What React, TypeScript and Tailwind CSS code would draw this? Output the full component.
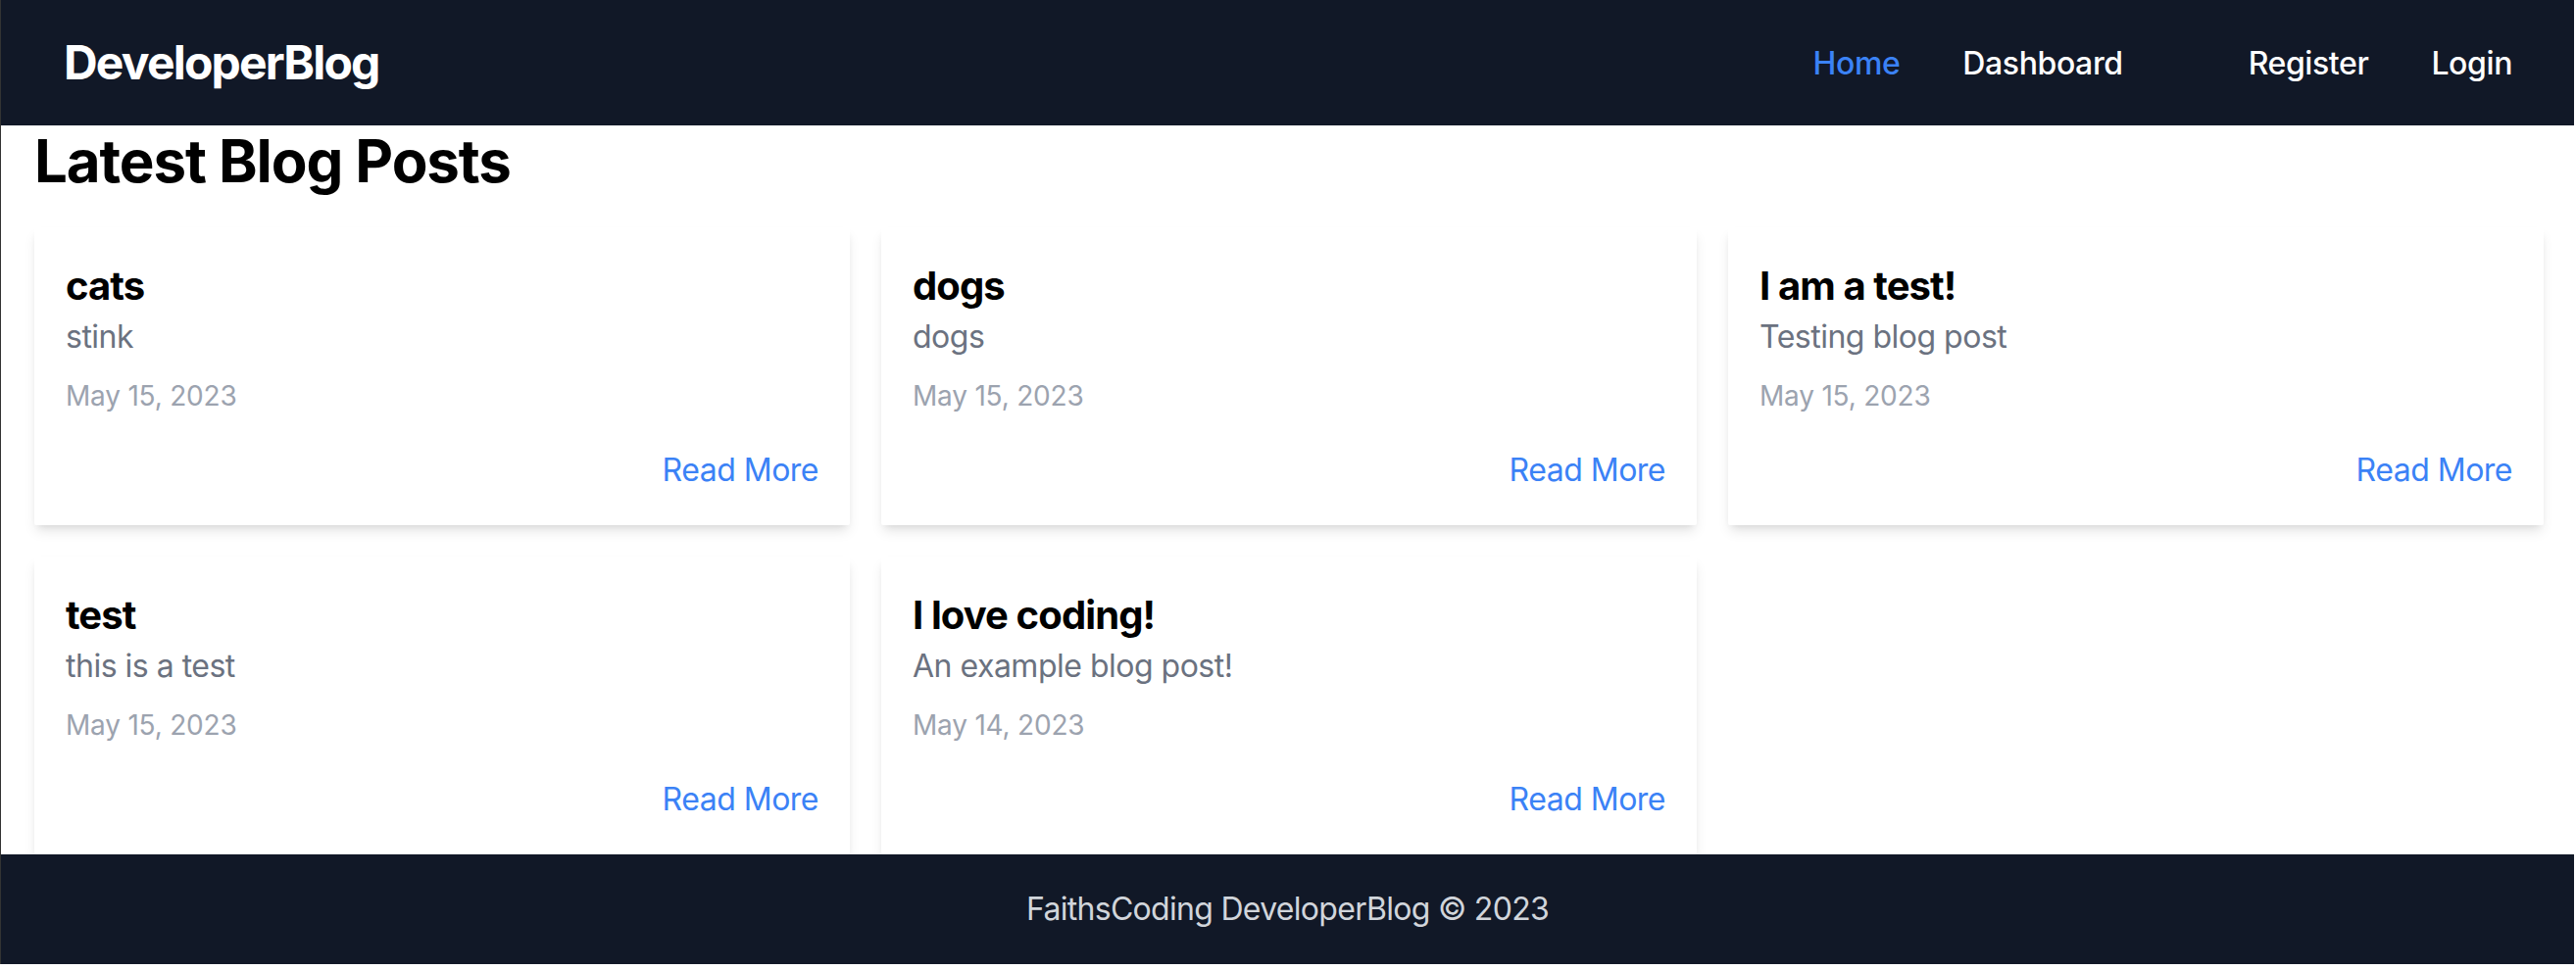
import React from "react";

type Post = { title: string; desc: string; date: string };

const posts: Post[] = [
  { title: "cats", desc: "stink", date: "May 15, 2023" },
  { title: "dogs", desc: "dogs", date: "May 15, 2023" },
  { title: "I am a test!", desc: "Testing blog post", date: "May 15, 2023" },
  { title: "test", desc: "this is a test", date: "May 15, 2023" },
  { title: "I love coding!", desc: "An example blog post!", date: "May 14, 2023" },
];

function Card({ post }: { post: Post }) {
  return (
    <div className="bg-white rounded-[2px] p-[32px] shadow-[0_8px_12px_-2px_rgba(0,0,0,0.1),0_4px_8px_-4px_rgba(0,0,0,0.1)]">
      <h2 className="text-[40px] leading-[56px] font-bold tracking-[-0.9px] text-black">{post.title}</h2>
      <p className="text-[32px] leading-[48px] tracking-[-0.5px] text-[#6b7280]">{post.desc}</p>
      <p className="mt-[16px] text-[28px] leading-[40px] tracking-[-0.2px] text-[#9ca3af]">{post.date}</p>
      <div className="mt-[32px] text-right">
        <a className="text-[32px] leading-[48px] tracking-[-0.5px] text-[#3b82f6]">Read More</a>
      </div>
    </div>
  );
}

export default function App() {
  return (
    <div className="font-['Inter','Liberation_Sans',sans-serif] bg-white border-l border-l-[#333333] border-r-2 border-r-white/25 min-h-[984px] flex flex-col">
      <nav className="h-[128px] bg-[#111827] flex items-center justify-between pl-[64px] pr-[63px]">
        <div className="text-[48px] leading-[64px] font-bold tracking-[-1.8px] text-white">DeveloperBlog</div>
        <div className="flex items-center pt-[2px]">
          <div className="flex items-center gap-[64px]">
            <a className="text-[32px] leading-[48px] font-medium tracking-[-0.4px] text-[#3b82f6]">Home</a>
            <a className="text-[32px] leading-[48px] font-medium tracking-[-0.4px] text-white">Dashboard</a>
          </div>
          <div className="flex items-center gap-[64px] ml-[128px]">
            <a className="text-[32px] leading-[48px] font-medium tracking-[-0.4px] text-white">Register</a>
            <a className="text-[32px] leading-[48px] font-medium tracking-[-0.4px] text-white">Login</a>
          </div>
        </div>
      </nav>
      <main className="flex-1 pl-[34px] pr-[31px]">
        <h1 className="text-[60px] leading-[72px] font-bold tracking-[-1.1px] text-black">Latest Blog Posts</h1>
        <div className="mt-[32px] grid grid-cols-3 gap-[32px]">
          {posts.map((p) => (
            <Card key={p.title} post={p} />
          ))}
        </div>
      </main>
      <footer className="bg-[#111827] py-[32px] text-center text-[32px] leading-[48px] tracking-[-0.7px] text-[#d1d5db]">
        FaithsCoding DeveloperBlog © 2023
      </footer>
    </div>
  );
}
